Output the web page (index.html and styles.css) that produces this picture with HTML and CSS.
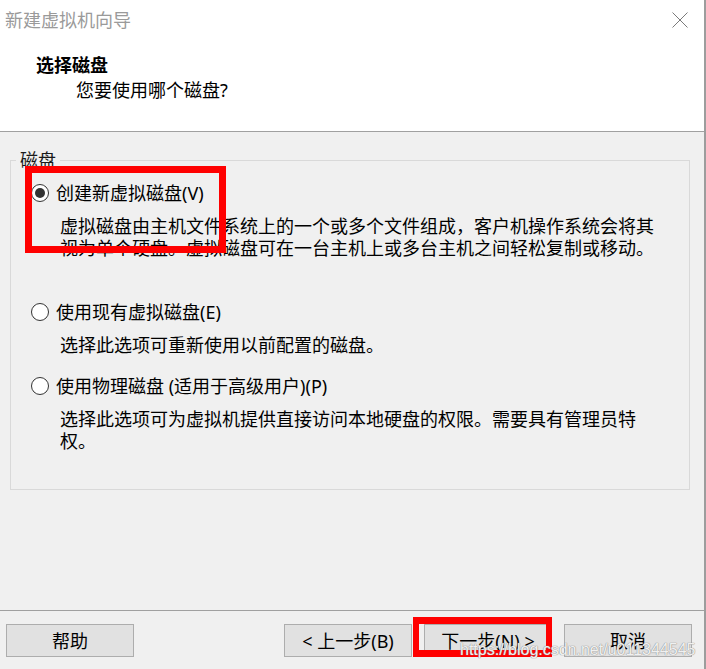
FILE: index.html
```html
<!DOCTYPE html>
<html lang="zh-CN">
<head>
<meta charset="utf-8">
<title>新建虚拟机向导</title>
<link rel="stylesheet" href="styles.css">
</head>
<body>
<div class="window">
  <div class="titlebar">
    <span class="title">新建虚拟机向导</span>
    <svg class="close" width="16" height="16" viewBox="0 0 16 16"><path d="M0.5 0.5L15.5 15.5M15.5 0.5L0.5 15.5" stroke="#7a7a7a" stroke-width="1" fill="none"/></svg>
  </div>
  <div class="header">
    <div class="h-title">选择磁盘</div>
    <div class="h-sub">您要使用哪个磁盘?</div>
  </div>
  <div class="sep"></div>
  <div class="main">
    <fieldset class="group">
      <legend>磁盘</legend>
      <div class="opt opt-create">
        <div class="opt-head"><span class="radio checked"></span><span class="opt-label">创建新虚拟磁盘(V)</span></div>
        <div class="opt-desc">虚拟磁盘由主机文件系统上的一个或多个文件组成，客户机操作系统会将其<br>视为单个硬盘。虚拟磁盘可在一台主机上或多台主机之间轻松复制或移动。</div>
      </div>
      <div class="opt opt-existing">
        <div class="opt-head"><span class="radio"></span><span class="opt-label">使用现有虚拟磁盘(E)</span></div>
        <div class="opt-desc">选择此选项可重新使用以前配置的磁盘。</div>
      </div>
      <div class="opt">
        <div class="opt-head"><span class="radio"></span><span class="opt-label">使用物理磁盘 (适用于高级用户)(P)</span></div>
        <div class="opt-desc">选择此选项可为虚拟机提供直接访问本地硬盘的权限。需要具有管理员特<br>权。</div>
      </div>
    </fieldset>
  </div>
  <div class="sep"></div>
  <div class="footer">
    <button class="btn">帮助</button>
    <div class="nav">
      <button class="btn">&lt; 上一步(B)</button>
      <button class="btn">下一步(N) &gt;</button>
      <button class="btn">取消</button>
    </div>
  </div>
  <div class="mark mark-option"></div>
  <div class="mark mark-next"></div>
  <div class="watermark">https://blog.csdn.net/u011344545</div>
</div>
</body>
</html>
```

FILE: styles.css
```css
* { box-sizing: border-box; }
html, body {
  margin: 0;
  padding: 0;
  background: #f0f0f0;
}
body {
  font-family: "Noto Sans", "Noto Sans CJK SC", sans-serif;
  font-size: 18px;
  line-height: 22px;
  color: #000;
  overflow: hidden;
}
.window {
  position: relative;
  width: 706px;
  height: 669px;
  border-right: 2px solid #9d9d9d;
  display: flex;
  flex-direction: column;
  background: #f0f0f0;
}
.titlebar {
  height: 40px;
  flex: none;
  background: #fff;
  display: flex;
  align-items: center;
  justify-content: space-between;
  padding: 0 16px 0 5px;
}
.title {
  color: #9a9a9a;
  font-size: 18px;
}
.close { display: block; }
.header {
  height: 91px;
  flex: none;
  background: #fff;
  padding-top: 14px;
}
.h-title {
  font-weight: bold;
  padding-left: 36px;
}
.h-sub {
  margin-top: 3px;
  padding-left: 76px;
}
.sep {
  height: 1px;
  flex: none;
  background: #a0a0a0;
}
.main {
  flex: 1;
  padding: 17px 0 0 10px;
}
.group {
  margin: 0;
  width: 680px;
  min-width: 0;
  border: 1px solid #d9d9d9;
  padding: 11px 0 37px 5px;
}
.group legend {
  padding: 0 4px;
  line-height: 22px;
  color: #1a1a1a;
}
.opt {
  padding-left: 15px;
}
.opt-create { margin-bottom: 42px; }
.opt-existing { margin-bottom: 19px; }
.opt-head {
  display: flex;
  align-items: center;
  height: 22px;
}
.radio {
  position: relative;
  width: 18px;
  height: 18px;
  flex: none;
  border: 1px solid #333;
  border-radius: 50%;
  background: #fff;
}
.radio.checked::after {
  content: "";
  position: absolute;
  left: 3px;
  top: 3px;
  width: 10px;
  height: 10px;
  border-radius: 50%;
  background: #333;
}
.opt-label {
  margin-left: 7px;
}
.opt-desc {
  margin-top: 11px;
  margin-left: 29px;
  white-space: nowrap;
}
.footer {
  height: 58px;
  flex: none;
  display: flex;
  justify-content: space-between;
  align-items: flex-start;
  padding: 13px 12px 0 6px;
}
.nav {
  display: flex;
  gap: 12px;
}
.btn {
  width: 128px;
  height: 33px;
  margin: 0;
  padding: 0;
  border: 1px solid #adadad;
  background: #e1e1e1;
  font-family: "Noto Sans", "Noto Sans CJK SC", sans-serif;
  font-size: 18px;
  line-height: 22px;
  color: #000;
}
.mark {
  position: absolute;
  border: 7px solid #ff0000;
}
.mark-option {
  left: 25px;
  top: 166px;
  width: 201px;
  height: 87px;
}
.mark-next {
  left: 413px;
  top: 617px;
  width: 139px;
  height: 40px;
  border-width: 7px 6px;
}
.watermark {
  position: absolute;
  left: 460px;
  top: 641px;
  font-family: "Liberation Sans", Arial, sans-serif;
  font-size: 16px;
  line-height: 18px;
  color: rgba(255, 255, 255, 0.9);
  text-shadow: 0 0 1px #8a8a8a, 0 0 1px #8a8a8a;
  white-space: nowrap;
}
```
